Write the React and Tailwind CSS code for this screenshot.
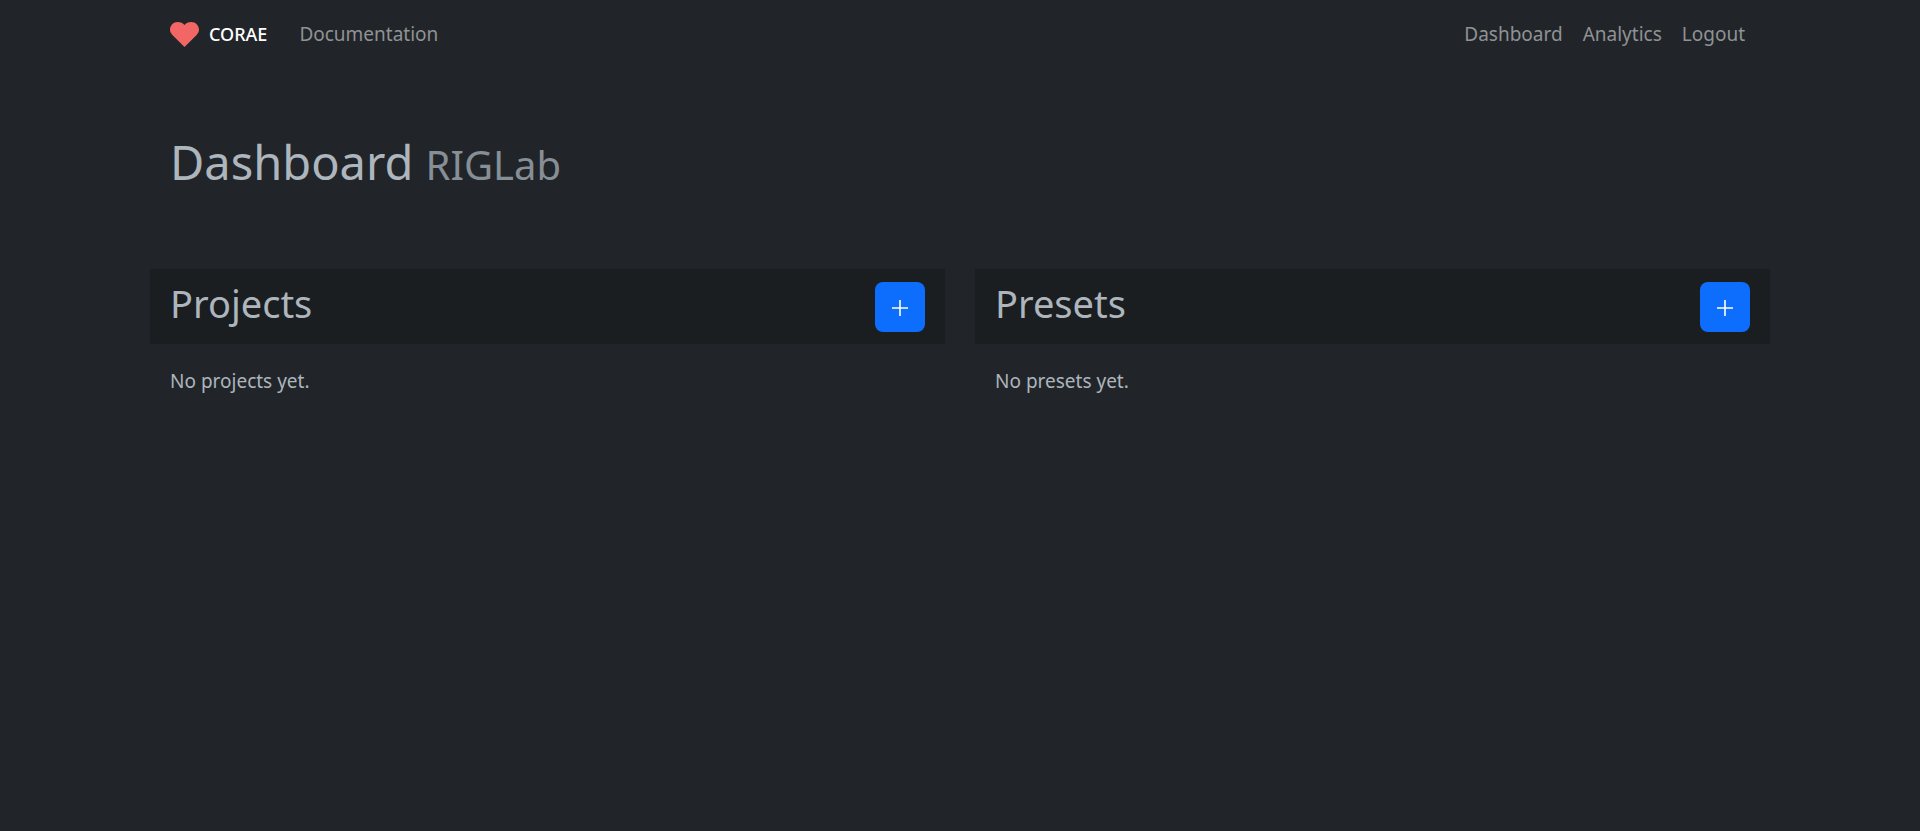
import React from "react";

const navLinks = ["Dashboard", "Analytics", "Logout"];

const panels = [
  { title: "Projects", empty: "No projects yet.", action: "Add project" },
  { title: "Presets", empty: "No presets yet.", action: "Add preset" },
];

function Heart() {
  return (
    <svg viewBox="0 0 29 25" className="h-[25px] w-[29px]" fill="#f36666" aria-hidden="true">
      <path d="M14.5 25 L2.6 13.2 C0.9 11.4 0 9.9 0 7.8 C0 3.4 3.4 0 7.7 0 C10.6 0 13 1 14.5 2.9 C16 1 18.4 0 21.3 0 C25.6 0 29 3.4 29 7.8 C29 9.9 28.1 11.4 26.4 13.2 Z" />
    </svg>
  );
}

function Panel({ title, empty, action }) {
  return (
    <section>
      <header className="flex items-start justify-between bg-[#1a1e21] px-5 pt-[13px] pb-3">
        <h2 className="text-[38px] leading-[42px] text-[#adb5bd]">{title}</h2>
        <button
          type="button"
          aria-label={action}
          className="flex size-[50px] items-center justify-center rounded-lg bg-[#0d6efd] text-white"
        >
          <svg viewBox="0 0 20 20" className="size-5" fill="none" stroke="currentColor" strokeWidth="1.6" aria-hidden="true">
            <path d="M10 3v16M2 11h16" />
          </svg>
        </button>
      </header>
      <p className="px-5 pt-[22px] text-[19px] leading-[30px] text-[#adb5bd]">{empty}</p>
    </section>
  );
}

export default function App() {
  return (
    <div className="min-h-screen bg-[#212529] px-[150px] font-['Segoe_UI','Noto_Sans',sans-serif]">
      <nav className="flex h-[68px] items-center justify-between px-5 text-[19px] leading-[30px] text-[#909294]">
        <div className="flex items-center">
          <a href="#" className="flex items-center gap-2.5 text-[18px] font-medium text-white">
            <Heart />
            <span>CORAE</span>
          </a>
          <a href="#documentation" className="ml-8">Documentation</a>
        </div>
        <div className="flex gap-5 pr-[5px]">
          {navLinks.map((label) => (
            <a key={label} href={"#" + label.toLowerCase()}>{label}</a>
          ))}
        </div>
      </nav>
      <main>
        <h1 className="px-5 pt-16 pb-[74px] text-[47px] leading-[60px] text-[#adb5bd]">
          Dashboard <small className="text-[40px] text-[#868e96]">RIGLab</small>
        </h1>
        <div className="grid grid-cols-2 gap-[30px]">
          {panels.map((panel) => (
            <Panel key={panel.title} {...panel} />
          ))}
        </div>
      </main>
    </div>
  );
}
